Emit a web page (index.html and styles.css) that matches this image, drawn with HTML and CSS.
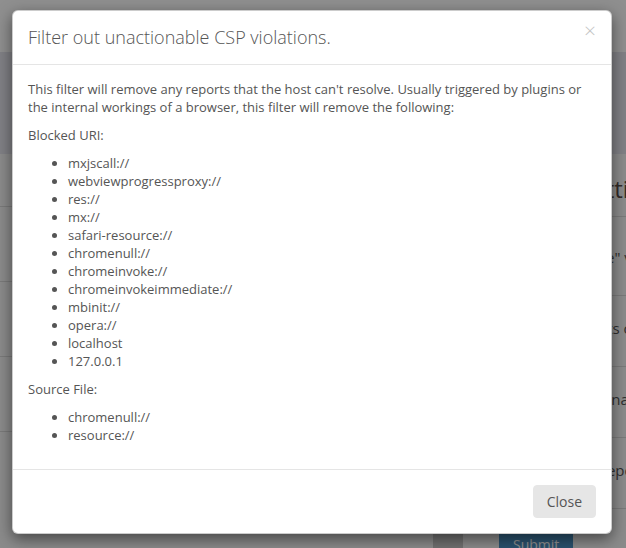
FILE: index.html
```html
<!DOCTYPE html>
<html lang="en">
<head>
    <meta charset="UTF-8">
    <meta name="viewport" content="width=device-width, initial-scale=1.0">
    <title>Settings</title>
    <link rel="stylesheet" href="styles.css">
</head>
<body>
    <div class="page">
        <div class="navbar"></div>
        <div class="panel-head"></div>
        <div class="settings">
            <aside class="side">
                <div class="side-row first"></div>
                <div class="side-row"></div>
                <div class="side-row"></div>
                <div class="side-row"></div>
            </aside>
            <section class="main">
                <h2 class="main-title">Settings</h2>
                <div class="row first">Filter "unsafe-inline" violations</div>
                <div class="row">Remove any reports containing data</div>
                <div class="row">Remove all unactionable violations</div>
                <div class="row">E-mail me a daily report</div>
                <div class="actions">
                    <span class="gutter"></span>
                    <button class="btn-submit">Submit</button>
                </div>
            </section>
        </div>
    </div>

    <div class="backdrop"></div>

    <div class="modal">
        <div class="modal-header">
            <span class="modal-close">&times;</span>
            <h4 class="modal-title">Filter out unactionable CSP violations.</h4>
        </div>
        <div class="modal-body">
            <p>This filter will remove any reports that the host can't resolve. Usually triggered by plugins or the internal workings of a browser, this filter will remove the following:</p>
            <p>Blocked URI:</p>
            <ul>
                <li>mxjscall://</li>
                <li>webviewprogressproxy://</li>
                <li>res://</li>
                <li>mx://</li>
                <li>safari-resource://</li>
                <li>chromenull://</li>
                <li>chromeinvoke://</li>
                <li>chromeinvokeimmediate://</li>
                <li>mbinit://</li>
                <li>opera://</li>
                <li>localhost</li>
                <li>127.0.0.1</li>
            </ul>
            <p>Source File:</p>
            <ul>
                <li>chromenull://</li>
                <li>resource://</li>
            </ul>
        </div>
        <div class="modal-footer">
            <button class="btn-close">Close</button>
        </div>
    </div>
</body>
</html>
```

FILE: styles.css
```css
html, body {
    margin: 0;
    height: 100%;
    overflow: hidden;
}
body {
    font-family: "Open Sans", "Liberation Sans", sans-serif;
    font-size: 13px;
    line-height: 18px;
    color: #555;
    position: relative;
}

/* page behind the dialog */
.page {
    min-height: 100vh;
    background: #f8f8f8;
}
.navbar {
    height: 52px;
    background: #fff;
}
.panel-head {
    height: 102px;
    background: #e4e5ee;
}
.settings {
    display: grid;
    grid-template-columns: 433px 1fr;
}
.side-row {
    height: 74px;
    border-bottom: 1px solid #dadada;
}
.side-row.first {
    height: 52px;
}
.main-title {
    margin: 0;
    height: 62px;
    font-size: 24px;
    font-weight: 400;
    line-height: 70px;
    color: #5a4d48;
    border-bottom: 1px solid #dadada;
    padding-left: 146px;
}
.row {
    height: 70px;
    padding-left: 46px;
    line-height: 64px;
    font-size: 15px;
    color: #555;
    border-bottom: 1px solid #dadada;
    white-space: nowrap;
}
.row.first {
    padding-top: 8px;
}
.actions {
    display: flex;
    gap: 36px;
    padding-top: 20px;
}
.gutter {
    width: 30px;
    height: 30px;
    background: #cacaca;
}
.btn-submit {
    font-family: inherit;
    font-size: 14px;
    color: #fff;
    background: #4d93c4;
    border: 0;
    border-radius: 0;
    padding: 6px 14px;
}

.backdrop {
    position: absolute;
    inset: 0;
    background: rgba(0, 0, 0, 0.44);
}

/* dialog */
.modal {
    position: absolute;
    top: 10px;
    left: 12px;
    width: 600px;
    background: #fff;
    border: 1px solid rgba(0, 0, 0, 0.2);
    border-radius: 6px;
    box-shadow: 0 5px 15px rgba(0, 0, 0, 0.5);
    box-sizing: border-box;
}
.modal-header {
    padding: 15px;
    border-bottom: 1px solid #e5e5e5;
}
.modal-title {
    margin: 0;
    font-size: 18px;
    font-weight: 300;
    line-height: 23px;
    color: #555;
}
.modal-close {
    float: right;
    margin-top: -8px;
    font-size: 21px;
    font-weight: 300;
    line-height: 24px;
    color: #c4c4c4;
}
.modal-body {
    padding: 15px;
}
.modal-body p {
    margin: 0 0 10px;
}
.modal-body ul {
    margin: 0 0 10px;
    padding-left: 40px;
}
.modal-footer {
    padding: 15px;
    border-top: 1px solid #e5e5e5;
    text-align: right;
}
.btn-close {
    font-family: inherit;
    font-size: 14px;
    line-height: 19px;
    color: #555;
    background: #e6e6e6;
    border: 1px solid #e6e6e6;
    border-radius: 4px;
    padding: 6px 13px;
}
```
